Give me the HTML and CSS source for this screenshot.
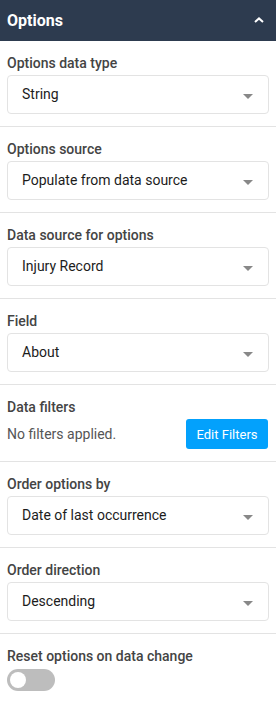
FILE: index.html
```html
<!DOCTYPE html>
<html lang="en">
<head>
    <meta charset="UTF-8">
    <meta name="viewport" content="width=device-width, initial-scale=1.0">
    <title>Options</title>
    <link rel="stylesheet" href="styles.css">
</head>
<body>
    <div class="panel">
        <div class="panel-header">
            <span class="panel-title">Options</span>
            <svg class="chevron" width="10" height="6" viewBox="0 0 10 6">
                <path d="M1 5 L5 1.4 L9 5" fill="none" stroke="#fff" stroke-width="2"/>
            </svg>
        </div>

        <div class="section">
            <div class="label">Options data type</div>
            <div class="select">
                <span>String</span>
                <svg class="caret" width="10" height="5" viewBox="0 0 10 5"><path d="M0 0 H10 L5 5 Z" fill="#888"/></svg>
            </div>
        </div>

        <div class="section">
            <div class="label">Options source</div>
            <div class="select">
                <span>Populate from data source</span>
                <svg class="caret" width="10" height="5" viewBox="0 0 10 5"><path d="M0 0 H10 L5 5 Z" fill="#888"/></svg>
            </div>
        </div>

        <div class="section">
            <div class="label">Data source for options</div>
            <div class="select">
                <span>Injury Record</span>
                <svg class="caret" width="10" height="5" viewBox="0 0 10 5"><path d="M0 0 H10 L5 5 Z" fill="#888"/></svg>
            </div>
        </div>

        <div class="section">
            <div class="label">Field</div>
            <div class="select">
                <span>About</span>
                <svg class="caret" width="10" height="5" viewBox="0 0 10 5"><path d="M0 0 H10 L5 5 Z" fill="#888"/></svg>
            </div>
        </div>

        <div class="section">
            <div class="label">Data filters</div>
            <div class="filters-row">
                <span class="filters-text">No filters applied.</span>
                <button class="edit-button">Edit Filters</button>
            </div>
        </div>

        <div class="section">
            <div class="label">Order options by</div>
            <div class="select">
                <span>Date of last occurrence</span>
                <svg class="caret" width="10" height="5" viewBox="0 0 10 5"><path d="M0 0 H10 L5 5 Z" fill="#888"/></svg>
            </div>
        </div>

        <div class="section">
            <div class="label">Order direction</div>
            <div class="select">
                <span>Descending</span>
                <svg class="caret" width="10" height="5" viewBox="0 0 10 5"><path d="M0 0 H10 L5 5 Z" fill="#888"/></svg>
            </div>
        </div>

        <div class="section last">
            <div class="label">Reset options on data change</div>
            <div class="toggle">
                <div class="knob"></div>
            </div>
        </div>
    </div>
</body>
</html>
```

FILE: styles.css
```css
body, html {
    margin: 0;
    padding: 0;
    background-color: #ffffff;
    font-family: Roboto, "Liberation Sans", Arial, sans-serif;
}

.panel {
    width: 276px;
}

.panel-header {
    height: 41px;
    background-color: #2d3b4f;
    display: flex;
    align-items: center;
    justify-content: space-between;
    padding: 0 12px 0 7px;
    box-sizing: border-box;
}

.panel-title {
    color: white;
    font-size: 16px;
    font-weight: 700;
    margin-top: -1px;
}

.chevron {
    display: block;
    margin-top: -1px;
}

.section {
    padding: 14px 7px 12px 7px;
    border-bottom: 1px solid #e3e3e3;
}

.section.last {
    border-bottom: none;
}

.label {
    font-size: 14px;
    line-height: 16px;
    font-weight: 500;
    color: #444444;
    margin-bottom: 4px;
}

.select {
    height: 39px;
    border: 1px solid #e3e3e3;
    border-radius: 4px;
    box-sizing: border-box;
    display: flex;
    align-items: center;
    justify-content: space-between;
    padding: 0 15px 2px 14px;
    font-size: 14px;
    color: #1c1c1c;
}

.caret {
    display: block;
    margin-top: 5px;
}

.filters-row {
    display: flex;
    align-items: center;
    justify-content: space-between;
    padding-right: 1px;
}

.filters-text {
    font-size: 14px;
    color: #555555;
}

.edit-button {
    width: 82px;
    height: 30px;
    background-color: #03a1fc;
    color: white;
    border: none;
    border-radius: 3px;
    font-family: inherit;
    font-size: 13px;
    padding: 0;
    cursor: pointer;
}

.toggle {
    width: 48px;
    height: 22px;
    margin-top: 5px;
    border-radius: 11px;
    background-color: #bdbdbd;
    display: flex;
    align-items: center;
    padding-left: 3px;
    box-sizing: border-box;
}

.knob {
    width: 16px;
    height: 16px;
    border-radius: 50%;
    background-color: white;
}
```
